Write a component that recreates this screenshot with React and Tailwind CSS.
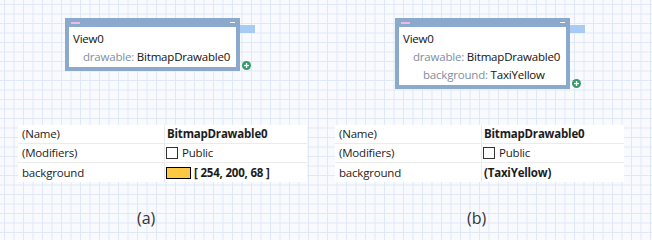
import React from 'react';

const PlusDot = () => (
  <svg width="9" height="9" viewBox="0 0 9 9" className="absolute left-[177px] bottom-[1px]">
    <circle cx="4.5" cy="4.5" r="4.5" fill="#3b9a6b" />
    <rect x="2" y="3.9" width="5" height="1.3" fill="#fff" />
    <rect x="3.9" y="2" width="1.3" height="5" fill="#fff" />
  </svg>
);

const NodeCard = ({ rows }) => (
  <div className="relative w-[175px]">
    <div className="h-[9px] bg-[#8aa9cd] flex items-center justify-between pl-[6px] pr-[5px]">
      <div className="w-[9px] h-[2px] bg-[#f2b8e4]" />
      <div className="w-[5px] h-[1px] bg-white" />
    </div>
    <div className="bg-white border-x-4 border-b-4 border-[#8aa9cd] pt-[3px] pb-[1px] pl-[4px] text-[11.5px] tracking-[-0.2px] leading-[18px]">
      <div className="text-[#111]">View0</div>
      {rows.map((r) => (
        <div key={r.label} className="whitespace-nowrap" style={{ paddingLeft: r.indent }}>
          <span className="text-[#7d8ea3]">{r.label}: </span>
          <span className="text-[#111]">{r.value}</span>
        </div>
      ))}
    </div>
    <div className="absolute left-full top-[7px] w-[15px] h-[8px] bg-[#a8cbf4]" />
    <PlusDot />
  </div>
);

const PropRow = ({ name, children, last }) => (
  <div className={`flex h-[19px] items-center ${last ? '' : 'border-b border-[#ebebeb]'}`}>
    <div className="w-[147px] h-full flex items-center pl-[4px] border-r border-[#ebebeb] text-[#1c1c1c]">{name}</div>
    <div className="flex-1 h-full flex items-center pl-[1px] text-[#1c1c1c]">{children}</div>
  </div>
);

const PropTable = ({ background }) => (
  <div className="w-[289px] bg-white text-[11.5px] tracking-[-0.2px]">
    <PropRow name="(Name)">
      <span className="font-bold pl-[1px]">BitmapDrawable0</span>
    </PropRow>
    <PropRow name="(Modifiers)">
      <span className="w-[12px] h-[12px] border border-[#333] bg-white" />
      <span className="ml-[4px]">Public</span>
    </PropRow>
    <PropRow name="background" last>
      {background}
    </PropRow>
  </div>
);

export default function App() {
  return (
    <div className="w-[652px] h-[240px] flex bg-[#f8fafe] bg-[linear-gradient(to_right,#dfe8f6_1px,transparent_1px),linear-gradient(to_bottom,#dfe8f6_1px,transparent_1px)] bg-[size:9.5px_9.5px] bg-[position:4px_4px] font-['Open_Sans',sans-serif] overflow-hidden">
      <div className="w-[326px] pt-[18px] flex flex-col">
        <div className="h-[107px] pl-[65px]">
          <NodeCard rows={[{ label: 'drawable', value: 'BitmapDrawable0', indent: 10 }]} />
        </div>
        <div className="pl-[18px]">
          <PropTable
            background={
              <>
                <span className="w-[25px] h-[12px] bg-[#fec844] border border-black" />
                <span className="ml-[3px] font-bold">[ 254, 200, 68 ]</span>
              </>
            }
          />
        </div>
        <div className="mt-[24px] pl-[137px] text-[16px] leading-[24px] text-[#333]">(a)</div>
      </div>
      <div className="w-[326px] pt-[18px] flex flex-col">
        <div className="h-[107px] pl-[69px]">
          <NodeCard
            rows={[
              { label: 'drawable', value: 'BitmapDrawable0', indent: 10 },
              { label: 'background', value: 'TaxiYellow', indent: 20 },
            ]}
          />
        </div>
        <div className="pl-[9px]">
          <PropTable background={<span className="font-bold pl-[1px]">(TaxiYellow)</span>} />
        </div>
        <div className="mt-[24px] pl-[141px] text-[16px] leading-[24px] text-[#333]">(b)</div>
      </div>
    </div>
  );
}
